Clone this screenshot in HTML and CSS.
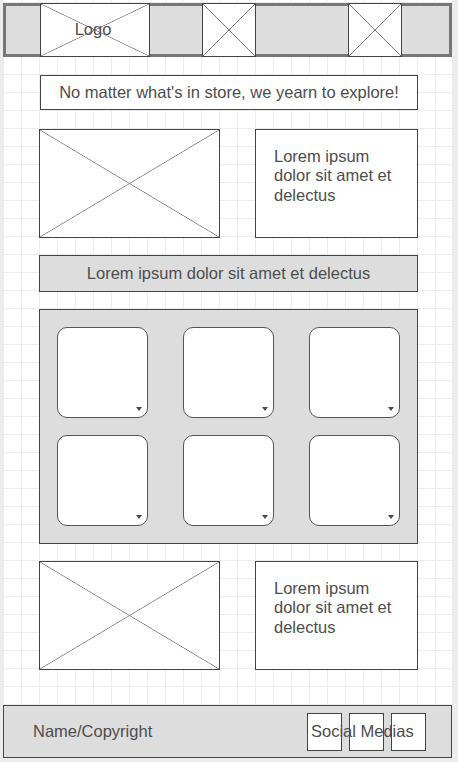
FILE: index.html
```html
<!DOCTYPE html>
<html lang="en">
<head>
<meta charset="utf-8">
<title>Wireframe</title>
<link rel="stylesheet" href="styles.css">
</head>
<body>
<div class="canvas">
  <header class="topbar">
    <div class="ph ph-logo"><span class="label">Logo</span></div>
    <div class="ph ph-sq ph-nav1"></div>
    <div class="ph ph-sq ph-nav2"></div>
  </header>
  <main class="content">
    <div class="tagline">No matter what's in store, we yearn to explore!</div>
    <div class="row">
      <div class="ph ph-img"></div>
      <div class="textbox">Lorem ipsum dolor sit amet et delectus</div>
    </div>
    <div class="banner">Lorem ipsum dolor sit amet et delectus</div>
    <div class="panel">
      <div class="tile"><span class="caret"></span></div>
      <div class="tile"><span class="caret"></span></div>
      <div class="tile"><span class="caret"></span></div>
      <div class="tile"><span class="caret"></span></div>
      <div class="tile"><span class="caret"></span></div>
      <div class="tile"><span class="caret"></span></div>
    </div>
    <div class="row">
      <div class="ph ph-img"></div>
      <div class="textbox">Lorem ipsum dolor sit amet et delectus</div>
    </div>
  </main>
  <footer class="footer">
    <span class="copyright">Name/Copyright</span>
    <div class="social">
      <div class="social-box"></div>
      <div class="social-box"></div>
      <div class="social-box"></div>
      <span class="social-label">Social Medias</span>
    </div>
  </footer>
</div>
</body>
</html>
```
FILE: styles.css
```css
* { box-sizing: border-box; }

html, body {
  margin: 0;
  padding: 0;
  background: #ececec;
}

body {
  font-family: "Liberation Sans", Arial, sans-serif;
  font-size: 16.5px;
  line-height: 19.3px;
  color: #4d4d4d;
  overflow: hidden;
}

.canvas {
  margin-left: 3px;
  width: 449px;
  height: 758px;
  padding-top: 3px;
  display: flex;
  flex-direction: column;
  background-color: #ffffff;
  background-image:
    linear-gradient(to right, #ececec 1px, transparent 1px),
    linear-gradient(to bottom, #ececec 1px, transparent 1px);
  background-size: 18px 18px;
  background-position: 0 2px;
}

/* placeholder with an X */
.ph {
  background-color: #ffffff;
  background-image:
    linear-gradient(to top right, transparent calc(50% - 0.7px), #7a7a7a 50%, transparent calc(50% + 0.7px)),
    linear-gradient(to bottom right, transparent calc(50% - 0.7px), #7a7a7a 50%, transparent calc(50% + 0.7px));
  border: 1px solid #444;
}

.topbar {
  height: 54px;
  border: 3px solid #777;
  background: #dddddd;
  display: flex;
}

.topbar .ph {
  height: 54px;
  margin-top: -3px;
  margin-bottom: -3px;
}

.ph-logo {
  width: 110px;
  margin-left: 34px;
  display: flex;
  align-items: center;
  justify-content: center;
}

.ph-logo .label {
  margin-right: 4px;
}

.ph-sq { width: 54px; }
.ph-nav1 { margin-left: 52px; }
.ph-nav2 { margin-left: 92px; }

.content {
  margin-left: 36px;
  width: 379px;
  display: flex;
  flex-direction: column;
}

.tagline {
  margin-top: 18px;
  margin-left: 1px;
  height: 35px;
  border: 1px solid #444;
  background: #fff;
  display: flex;
  align-items: center;
  justify-content: center;
}

.row {
  display: flex;
  gap: 35px;
  height: 109px;
  margin-top: 19px;
}

.banner + .panel + .row { margin-top: 17px; }

.ph-img { width: 181px; }

.textbox {
  width: 163px;
  border: 1px solid #444;
  background: #fff;
  padding: 17px 18px;
}

.banner {
  margin-top: 17px;
  height: 37px;
  border: 1px solid #444;
  background: #dddddd;
  display: flex;
  align-items: center;
  justify-content: center;
}

.panel {
  margin-top: 17px;
  height: 235px;
  border: 1px solid #444;
  background: #dddddd;
  padding: 17px;
  display: grid;
  grid-template-columns: repeat(3, 91px);
  grid-auto-rows: 91px;
  column-gap: 35px;
  row-gap: 17px;
}

.tile {
  position: relative;
  background: #fff;
  border: 1px solid #555;
  border-radius: 10px;
}

.caret {
  position: absolute;
  right: 5px;
  bottom: 6px;
  width: 0;
  height: 0;
  border-left: 3px solid transparent;
  border-right: 3px solid transparent;
  border-top: 4px solid #4a4a4a;
}

.footer {
  margin-top: 35px;
  height: 53px;
  border: 1px solid #444;
  background: #dddddd;
  display: flex;
  align-items: center;
  padding-left: 29px;
}

.social {
  position: relative;
  margin-left: auto;
  margin-right: 25px;
  display: flex;
  gap: 7px;
}

.social-box {
  width: 35px;
  height: 38px;
  border: 1px solid #444;
  background: #fff;
}

.social-label {
  position: absolute;
  left: 4px;
  top: 0;
  bottom: 0;
  display: flex;
  align-items: center;
  white-space: nowrap;
}
```
